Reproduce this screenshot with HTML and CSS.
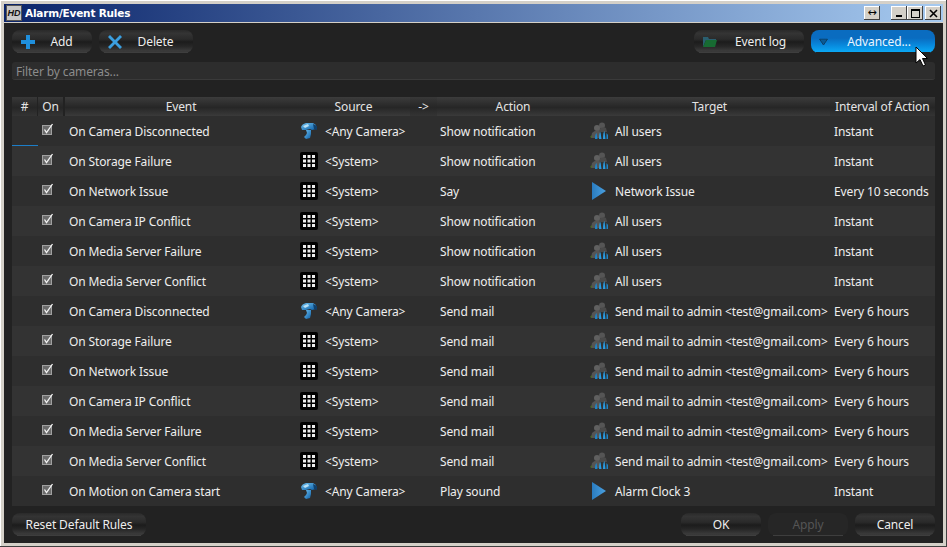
FILE: index.html
```html
<!DOCTYPE html>
<html lang="en">
<head>
<meta charset="utf-8">
<title>Alarm/Event Rules</title>
<link rel="stylesheet" href="styles.css">
</head>
<body>
<svg width="0" height="0" class="defs">
<defs>
<linearGradient id="camg" x1="0" y1="0" x2="1" y2="1"><stop offset="0" stop-color="#6fc0ee"/><stop offset="1" stop-color="#0c5fa8"/></linearGradient>
<linearGradient id="playg" x1="0" y1="0" x2="1" y2="0"><stop offset="0" stop-color="#2a7cc0"/><stop offset="1" stop-color="#4aa0e0"/></linearGradient>
<symbol id="cam" viewBox="0 0 18 18">
<path d="M1 5 Q2 2 6 1 L13 1 L16 3 L16 7 L12 8 L10 7 L6 8 L2 8 Z" fill="url(#camg)"/>
<path d="M13 2 L17 4 L17 8 L14 7 Z" fill="#10406c"/>
<path d="M6 8 L11 8 L11 12 L10 16 L6 17 L4 15 L6 13 L7 11 Z" fill="url(#camg)"/>
<path d="M3 4 L8 2 L9 4 L5 6 Z" fill="#b8e0f6"/>
</symbol>
<symbol id="grid" viewBox="0 0 18 18">
<rect x="0" y="0" width="18" height="18" rx="2" fill="#000"/>
<g fill="#eee">
<rect x="3" y="3" width="3" height="3"/><rect x="7.5" y="3" width="3" height="3"/><rect x="12" y="3" width="3" height="3"/>
<rect x="3" y="7.5" width="3" height="3"/><rect x="7.5" y="7.5" width="3" height="3"/><rect x="12" y="7.5" width="3" height="3"/>
<rect x="3" y="12" width="3" height="3"/><rect x="7.5" y="12" width="3" height="3"/><rect x="12" y="12" width="3" height="3"/>
</g>
</symbol>
<symbol id="users" viewBox="0 0 18 18">
<circle cx="12" cy="3.5" r="3" fill="#555"/>
<path d="M8 8 Q12 4 16 6 L17 10 L8 10 Z" fill="#4a4a4a"/>
<circle cx="7" cy="6" r="3" fill="#606060"/>
<path d="M1 16 L2 11 Q6 7 10 10 L10 16 Z" fill="#555"/>
<path d="M0 15 L2 13 L2 16 Z" fill="#4d6a28"/>
<path d="M5 17 Q5 12 6.5 11 L7.5 17 Z" fill="#1e86c8"/>
<path d="M9 17 Q9 11 10.5 10 L11.5 17 Z" fill="#2a9ae0"/>
<path d="M13 17 Q13 10 14.5 9 L15.5 17 Z" fill="#2a9ae0"/>
<path d="M16.5 17 L16.5 11 L18 13 L18 17 Z" fill="#1e86c8"/>
</symbol>
<symbol id="play" viewBox="0 0 16 18">
<path d="M1 0 L15 9 L1 18 Z" fill="url(#playg)"/>
</symbol>
<symbol id="check" viewBox="0 0 12 13">
<rect x="0.5" y="2.5" width="9" height="9" fill="#6c6c6c" stroke="#a0a0a0"/>
<path d="M2.5 6.5 L4.5 9.5 L10.5 1" fill="none" stroke="#f4f4f4" stroke-width="1.3"/>
</symbol>
</defs>
</svg>
<div class="window">
  <div class="titlebar">
    <span class="appicon">HD</span>
    <span class="title">Alarm/Event Rules</span>
    <span class="spacer"></span>
    <span class="winbtn wide">↔</span>
    <span class="wingap"></span>
    <span class="winbtn"><i class="g-min"></i></span>
    <span class="winbtn"><i class="g-max"></i></span>
    <span class="winbtn close">
      <svg width="9" height="9" viewBox="0 0 9 9"><path d="M1 1 L8 8 M8 1 L1 8" stroke="#000" stroke-width="1.6"/></svg>
    </span>
  </div>
  <div class="content">
    <div class="toolbar">
      <button class="btn b-add">
        <svg width="16" height="16" viewBox="0 0 16 16" class="ic"><path d="M6 1 H10 V6 H15 V10 H10 V15 H6 V10 H1 V6 H6 Z" fill="#1f8fdc"/></svg>
        <span class="lbl">Add</span>
      </button>
      <button class="btn b-del">
        <svg width="16" height="16" viewBox="0 0 16 16" class="ic"><path d="M1 3 L3 1 L8 6 L13 1 L15 3 L10 8 L15 13 L13 15 L8 10 L3 15 L1 13 L6 8 Z" fill="#3b9fe0"/></svg>
        <span class="lbl">Delete</span>
      </button>
      <span class="spacer"></span>
      <button class="btn b-log">
        <svg width="16" height="12" viewBox="0 0 16 12" class="ic"><path d="M1 1 H6 L7 3 H14 V4 H4 L1 11 Z" fill="#2a5f70"/><path d="M4 4 H15 L13 11 H1 Z" fill="#176b32"/></svg>
        <span class="lbl">Event log</span>
      </button>
      <button class="btn b-adv">
        <svg width="9" height="7" viewBox="0 0 9 7" class="ic"><path d="M0.5 0.5 H8.5 L4.5 6.5 Z" fill="#0b5a94" stroke="#0c3f66"/></svg>
        <span class="lbl">Advanced...</span>
      </button>
    </div>
    <div class="filter">Filter by cameras...</div>
    <div class="table">
      <div class="head">
        <span class="hc dark">#</span>
        <span class="hc dark">On</span>
        <span class="hc">Event</span>
        <span class="hc">Source</span>
        <span class="hc dark">-&gt;</span>
        <span class="hc">Action</span>
        <span class="hc">Target</span>
        <span class="hc dark left">Interval of Action</span>
      </div>
      <div class="row selected"><span class="c-num"></span><span class="c-on"><svg class="chk"><use href="#check"/></svg></span><span class="c-ev">On Camera Disconnected</span><span class="c-src"><svg class="ri"><use href="#cam"/></svg>&lt;Any Camera&gt;</span><span class="c-arrow"></span><span class="c-act">Show notification</span><span class="c-tgt"><svg class="ri"><use href="#users"/></svg>All users</span><span class="c-int">Instant</span></div>
      <div class="row"><span class="c-num"></span><span class="c-on"><svg class="chk"><use href="#check"/></svg></span><span class="c-ev">On Storage Failure</span><span class="c-src"><svg class="ri"><use href="#grid"/></svg>&lt;System&gt;</span><span class="c-arrow"></span><span class="c-act">Show notification</span><span class="c-tgt"><svg class="ri"><use href="#users"/></svg>All users</span><span class="c-int">Instant</span></div>
      <div class="row"><span class="c-num"></span><span class="c-on"><svg class="chk"><use href="#check"/></svg></span><span class="c-ev">On Network Issue</span><span class="c-src"><svg class="ri"><use href="#grid"/></svg>&lt;System&gt;</span><span class="c-arrow"></span><span class="c-act">Say</span><span class="c-tgt"><svg class="ri"><use href="#play"/></svg>Network Issue</span><span class="c-int">Every 10 seconds</span></div>
      <div class="row"><span class="c-num"></span><span class="c-on"><svg class="chk"><use href="#check"/></svg></span><span class="c-ev">On Camera IP Conflict</span><span class="c-src"><svg class="ri"><use href="#grid"/></svg>&lt;System&gt;</span><span class="c-arrow"></span><span class="c-act">Show notification</span><span class="c-tgt"><svg class="ri"><use href="#users"/></svg>All users</span><span class="c-int">Instant</span></div>
      <div class="row"><span class="c-num"></span><span class="c-on"><svg class="chk"><use href="#check"/></svg></span><span class="c-ev">On Media Server Failure</span><span class="c-src"><svg class="ri"><use href="#grid"/></svg>&lt;System&gt;</span><span class="c-arrow"></span><span class="c-act">Show notification</span><span class="c-tgt"><svg class="ri"><use href="#users"/></svg>All users</span><span class="c-int">Instant</span></div>
      <div class="row"><span class="c-num"></span><span class="c-on"><svg class="chk"><use href="#check"/></svg></span><span class="c-ev">On Media Server Conflict</span><span class="c-src"><svg class="ri"><use href="#grid"/></svg>&lt;System&gt;</span><span class="c-arrow"></span><span class="c-act">Show notification</span><span class="c-tgt"><svg class="ri"><use href="#users"/></svg>All users</span><span class="c-int">Instant</span></div>
      <div class="row"><span class="c-num"></span><span class="c-on"><svg class="chk"><use href="#check"/></svg></span><span class="c-ev">On Camera Disconnected</span><span class="c-src"><svg class="ri"><use href="#cam"/></svg>&lt;Any Camera&gt;</span><span class="c-arrow"></span><span class="c-act">Send mail</span><span class="c-tgt"><svg class="ri"><use href="#users"/></svg>Send mail to admin &lt;test@gmail.com&gt;</span><span class="c-int">Every 6 hours</span></div>
      <div class="row"><span class="c-num"></span><span class="c-on"><svg class="chk"><use href="#check"/></svg></span><span class="c-ev">On Storage Failure</span><span class="c-src"><svg class="ri"><use href="#grid"/></svg>&lt;System&gt;</span><span class="c-arrow"></span><span class="c-act">Send mail</span><span class="c-tgt"><svg class="ri"><use href="#users"/></svg>Send mail to admin &lt;test@gmail.com&gt;</span><span class="c-int">Every 6 hours</span></div>
      <div class="row"><span class="c-num"></span><span class="c-on"><svg class="chk"><use href="#check"/></svg></span><span class="c-ev">On Network Issue</span><span class="c-src"><svg class="ri"><use href="#grid"/></svg>&lt;System&gt;</span><span class="c-arrow"></span><span class="c-act">Send mail</span><span class="c-tgt"><svg class="ri"><use href="#users"/></svg>Send mail to admin &lt;test@gmail.com&gt;</span><span class="c-int">Every 6 hours</span></div>
      <div class="row"><span class="c-num"></span><span class="c-on"><svg class="chk"><use href="#check"/></svg></span><span class="c-ev">On Camera IP Conflict</span><span class="c-src"><svg class="ri"><use href="#grid"/></svg>&lt;System&gt;</span><span class="c-arrow"></span><span class="c-act">Send mail</span><span class="c-tgt"><svg class="ri"><use href="#users"/></svg>Send mail to admin &lt;test@gmail.com&gt;</span><span class="c-int">Every 6 hours</span></div>
      <div class="row"><span class="c-num"></span><span class="c-on"><svg class="chk"><use href="#check"/></svg></span><span class="c-ev">On Media Server Failure</span><span class="c-src"><svg class="ri"><use href="#grid"/></svg>&lt;System&gt;</span><span class="c-arrow"></span><span class="c-act">Send mail</span><span class="c-tgt"><svg class="ri"><use href="#users"/></svg>Send mail to admin &lt;test@gmail.com&gt;</span><span class="c-int">Every 6 hours</span></div>
      <div class="row"><span class="c-num"></span><span class="c-on"><svg class="chk"><use href="#check"/></svg></span><span class="c-ev">On Media Server Conflict</span><span class="c-src"><svg class="ri"><use href="#grid"/></svg>&lt;System&gt;</span><span class="c-arrow"></span><span class="c-act">Send mail</span><span class="c-tgt"><svg class="ri"><use href="#users"/></svg>Send mail to admin &lt;test@gmail.com&gt;</span><span class="c-int">Every 6 hours</span></div>
      <div class="row"><span class="c-num"></span><span class="c-on"><svg class="chk"><use href="#check"/></svg></span><span class="c-ev">On Motion on Camera start</span><span class="c-src"><svg class="ri"><use href="#cam"/></svg>&lt;Any Camera&gt;</span><span class="c-arrow"></span><span class="c-act">Play sound</span><span class="c-tgt"><svg class="ri"><use href="#play"/></svg>Alarm Clock 3</span><span class="c-int">Instant</span></div>
    </div>
    <div class="footer">
      <button class="btn b-reset">Reset Default Rules</button>
      <span class="spacer"></span>
      <button class="btn b-foot">OK</button>
      <button class="btn b-foot disabled">Apply</button>
      <button class="btn b-foot">Cancel</button>
    </div>
  </div>
</div>
<svg class="cursor" width="14" height="22" viewBox="0 0 14 22"><path d="M1 1 L1 17 L5 13.5 L8 20 L10.5 19 L7.5 12.5 L12.5 12.5 Z" fill="#fff" stroke="#000"/></svg>
</body>
</html>
```
FILE: styles.css
```css
* { box-sizing: border-box; }
html, body { margin: 0; padding: 0; }
body {
  width: 947px;
  height: 547px;
  overflow: hidden;
  position: relative;
  background: #fff;
  font-family: "Noto Sans", sans-serif;
  font-size: 12px;
  letter-spacing: -0.12px;
  color: #eee;
}
.defs { position: absolute; }
.spacer { flex: 1; }
.window {
  width: 947px;
  height: 547px;
  background: #d4d0c8;
  padding: 4px;
  display: flex;
  flex-direction: column;
  box-shadow: inset -1px -1px 0 #404040, inset 1px 1px 0 #fff;
}
.titlebar {
  height: 18px;
  flex: none;
  display: flex;
  align-items: center;
  background: linear-gradient(90deg, #0a246a, #a6caf0);
  color: #fff;
}
.appicon {
  width: 16px;
  height: 16px;
  margin: 0 3px 0 2px;
  background: #c8c8c8;
  border: 1px solid #555;
  color: #111;
  font: italic bold 9px/14px "Liberation Sans", sans-serif;
  text-align: center;
}
.title { font: bold 10.5px "DejaVu Sans", sans-serif; letter-spacing: -0.2px; }
.winbtn {
  width: 16px;
  height: 14px;
  background: #d4d0c8;
  box-shadow: inset -1px -1px 0 #404040, inset 1px 1px 0 #fff;
  display: flex;
  align-items: center;
  justify-content: center;
  color: #000;
  font: 11px/14px "DejaVu Sans", sans-serif;
}
.wingap { width: 11px; }
.winbtn.close { margin: 0 2px; }
.g-min { width: 6px; height: 2px; background: #000; margin-top: 6px; }
.g-max { width: 9px; height: 9px; border: 1px solid #000; border-top-width: 2px; }
.content {
  flex: 1;
  background: #222;
  padding: 7px 8px 7px;
  margin-top: 1px;
  display: flex;
  flex-direction: column;
}
.toolbar { display: flex; height: 23px; gap: 7px; }
.btn {
  height: 23px;
  padding: 0;
  border: 0;
  border-radius: 8px;
  background: linear-gradient(#2a2a2a 0, #343434 15%, #2a2a2a 40%, #1c1c1c 52%, #262626 70%, #3c3c3c 92%, #2a2a2a 100%);
  color: #eee;
  font: 12px "Noto Sans", sans-serif;
  letter-spacing: -0.12px;
  display: flex;
  align-items: center;
  justify-content: center;
  position: relative;
}
.btn::after {
  content: "";
  position: absolute;
  left: 5px;
  right: 5px;
  bottom: 0;
  height: 1px;
  background: #3e3e3e;
}
.btn .ic { position: absolute; left: 8px; top: 50%; transform: translateY(-50%); }
.b-add { width: 80px; }
.b-add .lbl { margin-left: 19px; }
.b-del { width: 94px; }
.b-del .lbl { margin-left: 19px; }
.b-log { width: 110px; }
.b-log .lbl { margin-left: 23px; }
.b-adv {
  width: 124px;
  background: linear-gradient(#0a6cc0, #0a6cc0 35%, #0888dc 65%, #0ba8f4 95%);
  color: #eaf6ff;
}
.b-adv::after { background: #222; }
.b-adv .lbl { margin-left: 12px; }
.filter {
  height: 18px;
  margin-top: 9px;
  padding-left: 4px;
  background: #2d2d2d;
  border-radius: 3px;
  border-bottom: 1px solid #3a3a3a;
  color: #8c8c8c;
  line-height: 19px;
}
.table { margin-top: 17px; }
.head, .row {
  display: grid;
  grid-template-columns: 26px 27px 232px 113px 27px 152px 241px 105px;
}
.head { height: 19px; }
.hc {
  text-align: center;
  line-height: 19px;
  color: #e4e4e4;
  background: linear-gradient(#3c3c3c, #2e2e2e 35%, #262626 55%, #3a3a3a 100%);
}
.hc.dark { background: linear-gradient(#383838, #2c2c2c 35%, #262626 55%, #343434 100%); }
.hc.left { text-align: left; padding-left: 5px; white-space: nowrap; }
.head .hc:nth-child(1) { margin-right: 1px; }
.head .hc:nth-child(2) { margin-right: 2px; }
.row {
  height: 30px;
  align-items: center;
  background: #2e2e2e;
  white-space: nowrap;
}
.row:nth-child(odd) { background: #333; }
.row > span { display: flex; align-items: center; height: 100%; }
.selected .c-num { border-bottom: 1px solid #1c7ec8; }
.c-on { padding-left: 4px; }
.chk { width: 12px; height: 13px; margin-top: -3px; }
.c-ev { padding-left: 4px; }
.c-src { padding-left: 3px; }
.c-act { padding-left: 3px; }
.c-tgt { padding-left: 1px; }
.c-int { padding-left: 4px; }
.ri { width: 18px; height: 18px; margin-right: 7px; flex: none; }
.footer { display: flex; height: 23px; margin-top: 7px; gap: 7px; }
.b-reset { width: 134px; }
.b-foot { width: 80px; }
.disabled { color: #555; background: #262626; }
.cursor { position: absolute; left: 915px; top: 46px; }
```
